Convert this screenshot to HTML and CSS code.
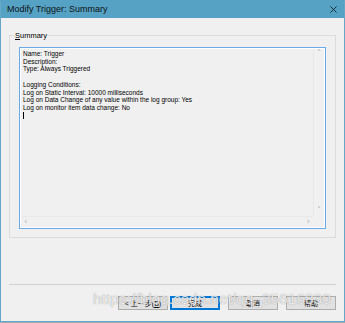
FILE: index.html
```html
<!DOCTYPE html>
<html>
<head>
  <title>Modify Trigger: Summary</title>
  <link rel="stylesheet" href="styles.css">
</head>
<body>
  <div class="window">
    <div class="title-bar">
      <span class="title">Modify Trigger: Summary</span>
      <svg class="close-icon" viewBox="0 0 8 8">
        <path d="M0.5 0.5 L7.5 7.5 M7.5 0.5 L0.5 7.5" stroke="#1a2a33" stroke-width="1.1" fill="none"/>
      </svg>
    </div>
    <div class="content">
      <fieldset class="group">
        <legend><u>S</u>ummary</legend>
        <div class="text-box">
          <div class="text-area">
            <div>Name: Trigger</div>
            <div>Description:</div>
            <div>Type: Always Triggered</div>
            <div>&nbsp;</div>
            <div>Logging Conditions:</div>
            <div>Log on Static Interval: 10000 milliseconds</div>
            <div>Log on Data Change of any value within the log group: Yes</div>
            <div>Log on monitor item data change: No</div>
            <div><span class="caret"></span></div>
          </div>
          <div class="v-scroll">
            <span class="arrow">&#x2C4;</span>
            <span class="arrow">&#x2C5;</span>
          </div>
          <div class="h-scroll">
            <span class="arrow">&#x2039;</span>
            <span class="arrow">&#x203A;</span>
          </div>
          <div class="corner"></div>
        </div>
      </fieldset>
    </div>
    <div class="footer">
      <div class="separator"></div>
      <div class="button-row">
        <button class="btn">&lt; 上一步(<u>B</u>)</button>
        <button class="btn focused">完成</button>
        <button class="btn gap">取消</button>
        <button class="btn gap">帮助</button>
      </div>
    </div>
    <div class="watermark">https://blog.csdn.net/qq_35616830</div>
  </div>
</body>
</html>
```

FILE: styles.css
```css
body {
  margin: 0;
  background-color: #9fa9ae;
  font-family: "Liberation Sans", Arial, "Noto Sans CJK SC", sans-serif;
  color: #000;
}
.window {
  position: relative;
  width: 343px;
  height: 321px;
  border: 1px solid #64a7c6;
  border-top: none;
  background-color: #f0f0f0;
  display: flex;
  flex-direction: column;
}
.title-bar {
  height: 18px;
  flex-shrink: 0;
  background-color: #55a2c5;
  display: flex;
  align-items: center;
  padding: 0 6px 0 6px;
}
.title {
  flex-grow: 1;
  font-size: 9px;
  color: #111;
}
.close-icon {
  width: 7px;
  height: 7px;
  margin-right: 1px;
}

.content {
  flex-grow: 1;
  padding: 13px 8px 0 8px;
}
.group {
  margin: 0;
  padding: 7px 9px 9px 9px;
  border: 1px solid #dcdcdc;
  height: 207px;
  box-sizing: border-box;
}
.group legend {
  font-size: 7.5px;
  padding: 0;
  margin-left: -4px;
}
.text-box {
  height: 182px;
  border: 1px solid #6aaae8;
  box-shadow: inset 0 0 0 1px #fff;
  display: grid;
  grid-template-columns: 1fr 11px;
  grid-template-rows: 1fr 11px;
  padding: 1px;
  box-sizing: border-box;
}
.text-area {
  font-size: 6.5px;
  line-height: 7.7px;
  padding: 1px 2px;
  overflow: hidden;
  white-space: nowrap;
}
.caret {
  display: inline-block;
  width: 1px;
  height: 7px;
  background-color: #000;
  vertical-align: middle;
}
.v-scroll {
  background-color: #f0f0f0;
  border-left: 1px solid #e8e8e8;
  display: flex;
  flex-direction: column;
  justify-content: space-between;
  align-items: center;
}
.h-scroll {
  background-color: #f0f0f0;
  border-top: 1px solid #e8e8e8;
  display: flex;
  justify-content: space-between;
  align-items: center;
  padding: 0 3px;
}
.arrow {
  color: #b0b0b0;
  font-size: 8px;
  line-height: 10px;
  font-family: "DejaVu Sans", sans-serif;
}
.corner {
  background-color: #f0f0f0;
}

.footer {
  height: 41px;
  flex-shrink: 0;
  padding: 0 8px;
}
.separator {
  border-top: 1px solid #d0d0d0;
  margin-top: 4px;
}
.button-row {
  display: flex;
  justify-content: flex-end;
  margin-top: 11px;
}
.btn {
  width: 50px;
  height: 14px;
  padding: 0;
  font-family: "Liberation Sans", "Noto Sans CJK SC", sans-serif;
  font-size: 7px;
  background-color: #e1e1e1;
  border: 1px solid #adadad;
  color: #000;
  margin-left: 2px;
}
.btn.focused {
  border-color: #0078d7;
  box-shadow: inset 0 0 0 1px #0078d7;
}
.btn.gap {
  margin-left: 8px;
}

/* watermark from the original screenshot */
.watermark {
  position: absolute;
  left: 92px;
  top: 290px;
  font-size: 15.5px;
  color: rgba(255, 255, 255, 0.8);
  text-shadow: 0 0 1px rgba(90, 90, 90, 0.7);
  white-space: nowrap;
  pointer-events: none;
}
```
